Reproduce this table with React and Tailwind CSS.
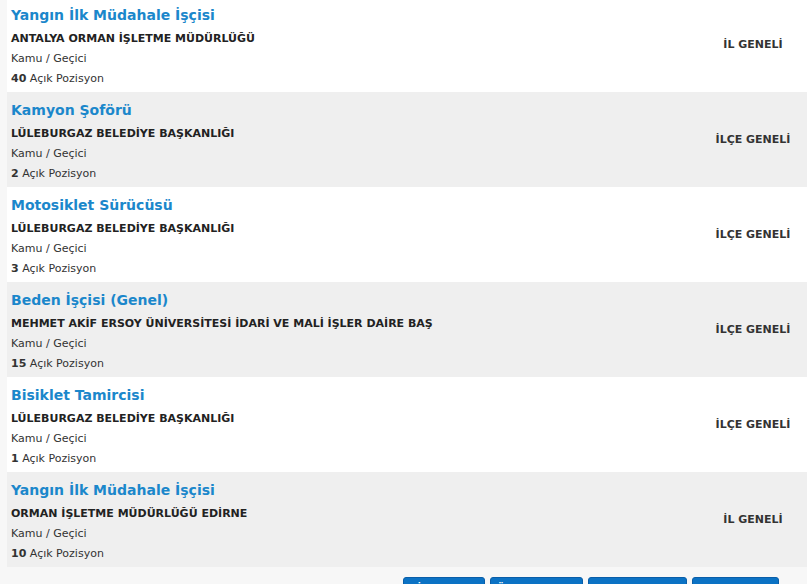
const jobs = [
  { title: 'Yangın İlk Müdahale İşçisi', org: 'ANTALYA ORMAN İŞLETME MÜDÜRLÜĞÜ', type: 'Kamu / Geçici', count: 40, scope: 'İL GENELİ' },
  { title: 'Kamyon Şoförü', org: 'LÜLEBURGAZ BELEDİYE BAŞKANLIĞI', type: 'Kamu / Geçici', count: 2, scope: 'İLÇE GENELİ' },
  { title: 'Motosiklet Sürücüsü', org: 'LÜLEBURGAZ BELEDİYE BAŞKANLIĞI', type: 'Kamu / Geçici', count: 3, scope: 'İLÇE GENELİ' },
  { title: 'Beden İşçisi (Genel)', org: 'MEHMET AKİF ERSOY ÜNİVERSİTESİ İDARİ VE MALİ İŞLER DAİRE BAŞ', type: 'Kamu / Geçici', count: 15, scope: 'İLÇE GENELİ' },
  { title: 'Bisiklet Tamircisi', org: 'LÜLEBURGAZ BELEDİYE BAŞKANLIĞI', type: 'Kamu / Geçici', count: 1, scope: 'İLÇE GENELİ' },
  { title: 'Yangın İlk Müdahale İşçisi', org: 'ORMAN İŞLETME MÜDÜRLÜĞÜ EDİRNE', type: 'Kamu / Geçici', count: 10, scope: 'İL GENELİ' },
];

const pages = [
  { label: 'İlk Sayfa', w: 'w-[82px]' },
  { label: 'Önceki Sayfa', w: 'w-[93px]' },
  { label: 'Sonraki Sayfa', w: 'w-[99px]' },
  { label: 'Son Sayfa', w: 'w-[87px]' },
];

export default function App() {
  return (
    <div className="h-[584px] w-[807px] overflow-hidden bg-[#f7f7f7] font-['DejaVu_Sans',Verdana,sans-serif]">
      <div className="-mt-[3px] ml-[7px] flex flex-col">
        {jobs.map((job, i) => (
          <div
            key={i}
            className={`flex h-[95px] items-center ${i % 2 ? 'bg-[#efefef]' : 'bg-white'}`}
          >
            <div className="flex flex-1 flex-col pl-[4px] pt-[5px]">
              <div className="h-[20px] text-[14px] font-bold leading-[20px] text-[#1b87cb]">{job.title}</div>
              <div className="mt-[4px] h-[20px] text-[11px] font-bold leading-[20px] text-[#222]">{job.org}</div>
              <div className="h-[20px] text-[11px] leading-[20px] text-[#333]">{job.type}</div>
              <div className="h-[20px] text-[11px] leading-[20px] text-[#333]">
                <span className="font-bold">{job.count}</span> Açık Pozisyon
              </div>
            </div>
            <div className="w-[108px] pt-[2px] text-center text-[11px] font-bold text-[#333]">{job.scope}</div>
          </div>
        ))}
      </div>
      <div className="mt-[10px] flex gap-[5px] pl-[403px]">
        {pages.map(p => (
          <div
            key={p.label}
            className={`${p.w} h-[20px] rounded-t-[3px] border border-[#0a5ea8] bg-[#0b72c4] pt-[3px] text-center text-[11px] font-bold text-white`}
          >
            {p.label}
          </div>
        ))}
      </div>
    </div>
  );
}
